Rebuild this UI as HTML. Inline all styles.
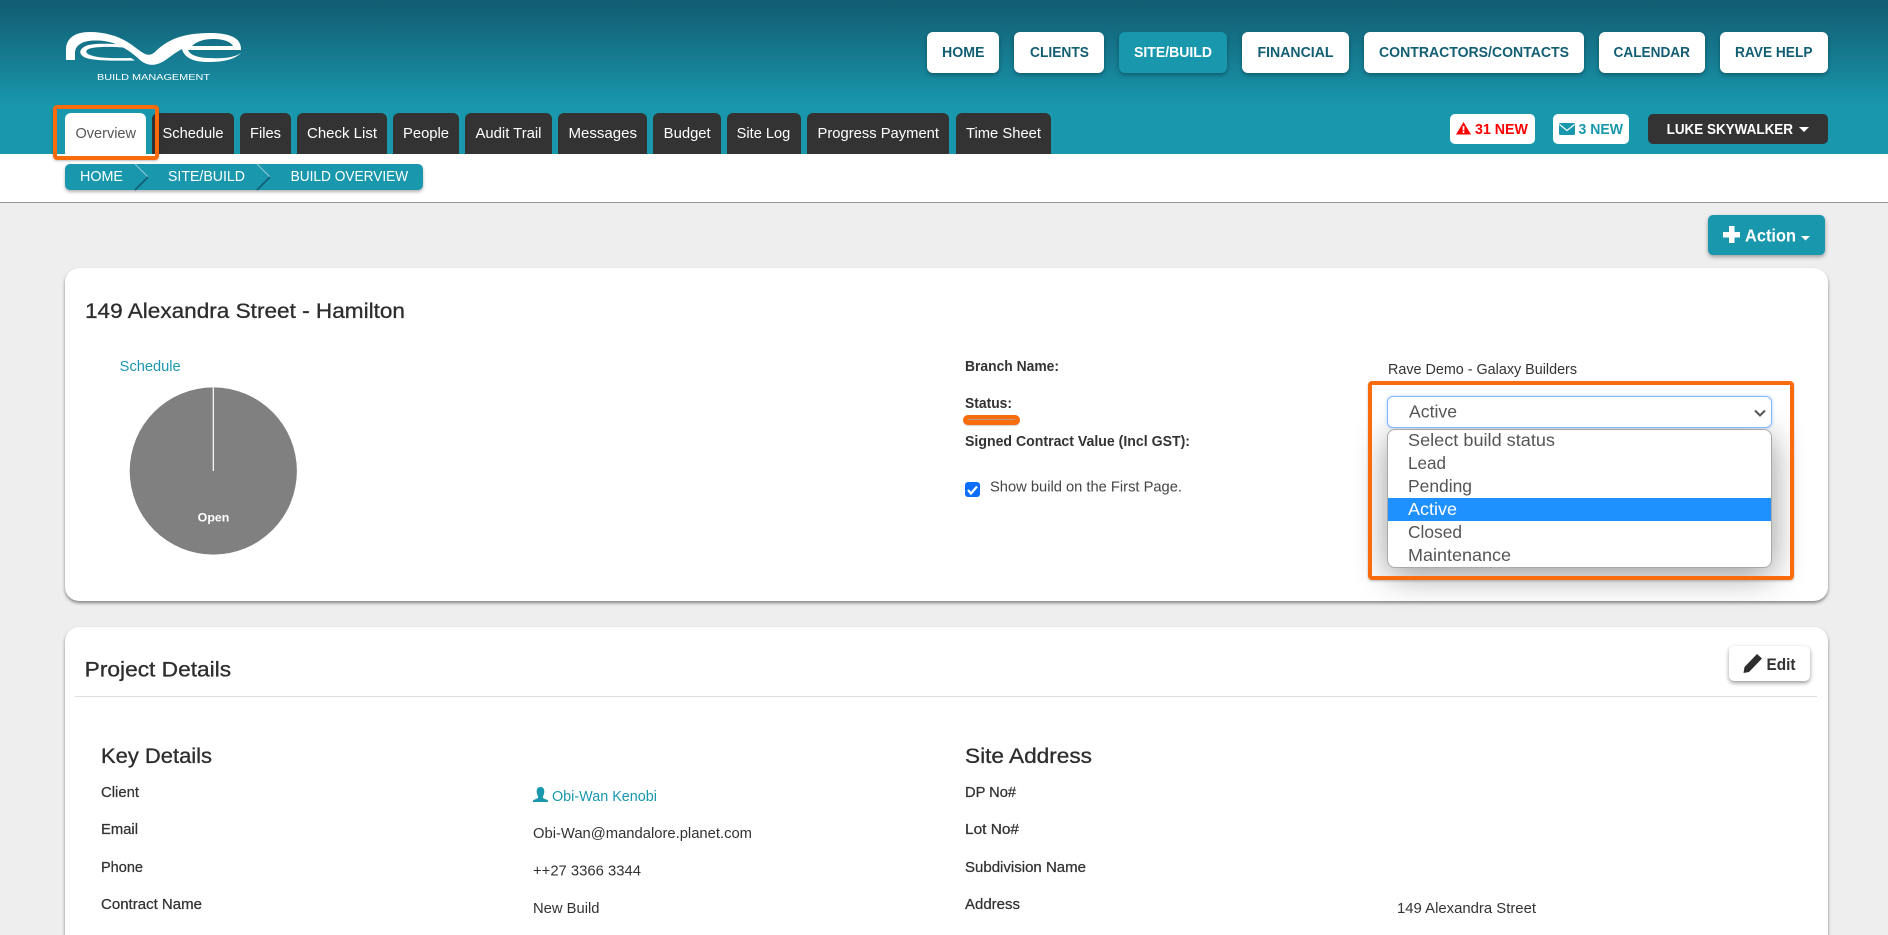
<!DOCTYPE html>
<html><head><meta charset="utf-8"><title>Build Overview</title>
<style>
*{box-sizing:border-box}
html,body{margin:0;padding:0;width:1888px;height:935px;overflow:hidden;background:#eee;font-family:"Liberation Sans",sans-serif}
#page{position:relative;width:1888px;height:935px;overflow:hidden;background:#eee}
.a{position:absolute}
#hdr{left:0;top:0;width:1888px;height:154px;background:linear-gradient(to bottom,#125e73 0,#125e73 6px,#1997ad 105px,#1997ad 154px)}
#bar{left:0;top:154px;width:1888px;height:49px;background:#fff;border-bottom:1px solid #999}
.nav{top:32px;height:41px;background:#fff;border-radius:6px;box-shadow:0 2px 4px rgba(0,0,0,.3)}
.tab{top:113px;height:41px;background:#333;border-radius:6px 6px 0 0}
.bdg{top:114px;height:30px;background:#fff;border-radius:5px}
.card{background:#fff;border-radius:14px;box-shadow:0 2px 3px rgba(0,0,0,.45)}
svg text{font-family:"Liberation Sans",sans-serif;white-space:pre}
.n{font-size:14.5px;font-weight:700;fill:#125e73}
.t{font-size:14.4px;fill:#fff}
.l{font-size:14.4px;fill:#333}
.b{font-size:14.4px;font-weight:700;fill:#333}
.m{font-size:14.4px;fill:#333;stroke:#333;stroke-width:.25}
.h{font-size:20.8px;fill:#2d2d2d;stroke:#2d2d2d;stroke-width:.3}
.o{font-size:17.6px;fill:#555}
</style></head><body>
<div id="page">
<div class="a" id="hdr"></div>
<div class="a" id="bar"></div>

<div class="a nav" style="left:927px;width:72px"></div>
<div class="a nav" style="left:1014px;width:90px"></div>
<div class="a nav" style="left:1119px;width:108px;background:#1997ad"></div>
<div class="a nav" style="left:1242px;width:107px"></div>
<div class="a nav" style="left:1364px;width:220px"></div>
<div class="a nav" style="left:1599px;width:106px"></div>
<div class="a nav" style="left:1720px;width:108px"></div>

<div class="a tab" style="left:65px;width:81px;background:#fff"></div>
<div class="a tab" style="left:152px;width:82px"></div>
<div class="a tab" style="left:240px;width:51px"></div>
<div class="a tab" style="left:297px;width:90px"></div>
<div class="a tab" style="left:393px;width:66px"></div>
<div class="a tab" style="left:465px;width:87px"></div>
<div class="a tab" style="left:558px;width:89px"></div>
<div class="a tab" style="left:653px;width:68px"></div>
<div class="a tab" style="left:727px;width:74px"></div>
<div class="a tab" style="left:807px;width:142px"></div>
<div class="a tab" style="left:956px;width:95px"></div>

<div class="a bdg" style="left:1450px;width:85px"></div>
<div class="a bdg" style="left:1553px;width:76px"></div>
<div class="a bdg" style="left:1648px;width:180px;background:#333"></div>

<div class="a" style="left:65px;top:164px;width:358px;height:26px;background:#1997ad;border-radius:5px;box-shadow:0 2px 3px rgba(0,0,0,.3)"></div>
<div class="a" style="left:1708px;top:215px;width:117px;height:40px;background:#1997ad;border-radius:5px;box-shadow:0 2px 4px rgba(0,0,0,.35)"></div>

<div class="a card" style="left:65px;top:268px;width:1763px;height:333px"></div>
<div class="a card" style="left:65px;top:627px;width:1763px;height:340px"></div>
<div class="a" style="left:75px;top:696px;width:1742px;height:1px;background:#ddd"></div>
<div class="a" style="left:1729px;top:646px;width:81px;height:35px;background:#fff;border-radius:5px;box-shadow:0 2px 4px rgba(0,0,0,.4)"></div>

<!-- dropdown -->
<div class="a" style="left:1388px;top:429px;width:384px;height:138px;border-radius:8px;box-shadow:0 8px 34px rgba(0,0,0,.42)"></div>
<div class="a" style="left:1387px;top:396px;width:385px;height:32px;background:#fff;border:1px solid #86b7fe;border-radius:6px;box-shadow:0 0 3px rgba(13,110,253,.3)"></div>
<div class="a" style="left:1387px;top:429px;width:385px;height:139px;background:#fff;border:1px solid #aaa;border-radius:8px;overflow:hidden"><div class="a" style="left:0;top:68px;width:383px;height:23px;background:#1e90ff"></div></div>

<!-- checkbox -->
<div class="a" style="left:965px;top:482px;width:15px;height:15px;background:#0d6efd;border-radius:3px"></div>

<!-- orange annotations -->
<div class="a" style="left:53px;top:105px;width:106px;height:55px;border:4px solid #f96b0b;border-radius:4px;box-shadow:0 1px 2px rgba(0,0,0,.25)"></div>
<div class="a" style="left:1368px;top:381px;width:426px;height:199px;border:4px solid #f96b0b;border-radius:4px;box-shadow:0 1px 2px rgba(0,0,0,.25)"></div>
<div class="a" style="left:963px;top:415px;width:57px;height:10px;background:#f96b0b;border-radius:5px;box-shadow:0 1px 1px rgba(0,0,0,.2)"><div class="a" style="left:5px;top:4px;width:47px;height:1px;background:#bb9a85"></div></div>

<svg class="a" style="left:0;top:0" width="1888" height="935" viewBox="0 0 1888 935" xmlns="http://www.w3.org/2000/svg">
<!-- logo -->
<path fill="#fff" fill-rule="evenodd" d="M66 60L66 50C66 38 75 32 90 32C108 32 124 38 136 48C145 55 149 57 155 52C167 40 182 33 210 33C230 33 241 38 241 49L241 50L188 50C190 55 198 58 210 58C225 59 235 57 241 53C234 60 222 62 208 62C192 62 184 57 182 49C176 52 170 57 164 61C155 66.5 147 66 140 60C128 49 115 41 98 40.5C84 40 76 44 75 52L75 60ZM192 46C197 41 205 39 213 39C224 39 231 42 233 46Z"/>
<path fill="#fff" d="M122 44.5C105 43.5 90 43 84 47C79 50 79 54 84 57C90 60.5 110 61 135 60.5L131 58C112 58.5 97 58 90 55C85 53 85 50 90 48.5C97 46.5 110 46.5 123 47.5Z"/>
<text x="97" y="80" font-size="8" fill="#fff" textLength="113" lengthAdjust="spacingAndGlyphs">BUILD MANAGEMENT</text>

<!-- nav -->
<text class="n" x="942" y="57" textLength="42.5" lengthAdjust="spacingAndGlyphs">HOME</text>
<text class="n" x="1030" y="57" textLength="59" lengthAdjust="spacingAndGlyphs">CLIENTS</text>
<text class="n" x="1134" y="57" textLength="78" lengthAdjust="spacingAndGlyphs" style="fill:#fff">SITE/BUILD</text>
<text class="n" x="1257.5" y="57" textLength="76" lengthAdjust="spacingAndGlyphs">FINANCIAL</text>
<text class="n" x="1379" y="57" textLength="190" lengthAdjust="spacingAndGlyphs">CONTRACTORS/CONTACTS</text>
<text class="n" x="1613.5" y="57" textLength="76.5" lengthAdjust="spacingAndGlyphs">CALENDAR</text>
<text class="n" x="1735" y="57" textLength="77.5" lengthAdjust="spacingAndGlyphs">RAVE HELP</text>

<!-- tabs -->
<text class="t" x="75.5" y="138" textLength="60.5" lengthAdjust="spacingAndGlyphs" style="fill:#555">Overview</text>
<text class="t" x="162.5" y="138" textLength="61" lengthAdjust="spacingAndGlyphs">Schedule</text>
<text class="t" x="250" y="138" textLength="31" lengthAdjust="spacingAndGlyphs">Files</text>
<text class="t" x="307" y="138" textLength="70" lengthAdjust="spacingAndGlyphs">Check List</text>
<text class="t" x="403" y="138" textLength="46" lengthAdjust="spacingAndGlyphs">People</text>
<text class="t" x="475.5" y="138" textLength="66" lengthAdjust="spacingAndGlyphs">Audit Trail</text>
<text class="t" x="568.5" y="138" textLength="68.5" lengthAdjust="spacingAndGlyphs">Messages</text>
<text class="t" x="663.7" y="138" textLength="47" lengthAdjust="spacingAndGlyphs">Budget</text>
<text class="t" x="736.7" y="138" textLength="53.5" lengthAdjust="spacingAndGlyphs">Site Log</text>
<text class="t" x="817.5" y="138" textLength="121.5" lengthAdjust="spacingAndGlyphs">Progress Payment</text>
<text class="t" x="966" y="138" textLength="75" lengthAdjust="spacingAndGlyphs">Time Sheet</text>

<!-- badges -->
<path fill="#f00" d="M1463.5 122L1471 134.5H1456ZM1462.6 126V130.5H1464.4V126ZM1462.6 131.3V133H1464.4V131.3Z" fill-rule="evenodd"/>
<text x="1475" y="134" font-size="14.4" font-weight="700" fill="#f00" textLength="53" lengthAdjust="spacingAndGlyphs">31 NEW</text>
<rect x="1559" y="123" width="16" height="12" rx="1.5" fill="#1997ad"/>
<path d="M1559.5 124.5L1567 130.5L1574.5 124.5" fill="none" stroke="#fff" stroke-width="1.2"/>
<text x="1578.5" y="134" font-size="14.4" font-weight="700" fill="#1997ad" textLength="44.5" lengthAdjust="spacingAndGlyphs">3 NEW</text>
<text x="1666.6" y="134" font-size="14.4" font-weight="700" fill="#fff" textLength="126.4" lengthAdjust="spacingAndGlyphs">LUKE SKYWALKER</text>
<path d="M1799 127H1809L1804 132Z" fill="#fff"/>

<!-- breadcrumb -->
<text class="t" x="80" y="181" textLength="43" lengthAdjust="spacingAndGlyphs">HOME</text>
<text class="t" x="168" y="181" textLength="77" lengthAdjust="spacingAndGlyphs">SITE/BUILD</text>
<text class="t" x="290.6" y="181" textLength="117.6" lengthAdjust="spacingAndGlyphs">BUILD OVERVIEW</text>
<path d="M135 164L148 177" stroke="#8fcbd6" stroke-width="1" fill="none"/>
<path d="M148 177L135 190" stroke="#125e73" stroke-width="1.6" fill="none"/>
<path d="M257 164L270 177" stroke="#8fcbd6" stroke-width="1" fill="none"/>
<path d="M270 177L257 190" stroke="#125e73" stroke-width="1.6" fill="none"/>

<!-- action -->
<path fill="#fff" d="M1729 226H1734.5V232H1740V237.5H1734.5V243H1729V237.5H1723V232H1729Z"/>
<text x="1745" y="241.5" font-size="17.6" font-weight="700" fill="#fff" textLength="51" lengthAdjust="spacingAndGlyphs">Action</text>
<path d="M1801 236H1810L1805.5 240.5Z" fill="#fff"/>

<!-- card 1 -->
<text class="h" x="85" y="318" textLength="320" lengthAdjust="spacingAndGlyphs">149 Alexandra Street - Hamilton</text>
<text class="t" x="119.7" y="371" textLength="61" lengthAdjust="spacingAndGlyphs" style="fill:#1997ad">Schedule</text>
<circle cx="213.3" cy="471" r="83.6" fill="#808080"/>
<path d="M213.3 387V471" stroke="#fff" stroke-width="1.2"/>
<text x="197.7" y="521.5" font-size="12" font-weight="700" fill="#fff" textLength="31.7" lengthAdjust="spacingAndGlyphs">Open</text>

<text class="b" x="965" y="371" textLength="94" lengthAdjust="spacingAndGlyphs">Branch Name:</text>
<text class="b" x="965" y="408" textLength="47" lengthAdjust="spacingAndGlyphs">Status:</text>
<text class="b" x="965" y="446" textLength="225" lengthAdjust="spacingAndGlyphs">Signed Contract Value (Incl GST):</text>
<path d="M968 490L971 493.5L977 486.5" fill="none" stroke="#fff" stroke-width="2.2"/>
<text class="l" x="990" y="491.5" textLength="192" lengthAdjust="spacingAndGlyphs" style="fill:#444">Show build on the First Page.</text>
<text class="l" x="1388" y="374" textLength="189" lengthAdjust="spacingAndGlyphs">Rave Demo - Galaxy Builders</text>

<text class="o" x="1409" y="417.5" textLength="48" lengthAdjust="spacingAndGlyphs">Active</text>
<path d="M1755 410.5L1760 415.5L1765 410.5" fill="none" stroke="#555" stroke-width="2"/>
<text class="o" x="1408" y="446" textLength="147" lengthAdjust="spacingAndGlyphs">Select build status</text>
<text class="o" x="1408" y="469" textLength="38" lengthAdjust="spacingAndGlyphs">Lead</text>
<text class="o" x="1408" y="492" textLength="64" lengthAdjust="spacingAndGlyphs">Pending</text>
<text class="o" x="1408" y="515" textLength="49" lengthAdjust="spacingAndGlyphs" style="fill:#fff">Active</text>
<text class="o" x="1408" y="538" textLength="54" lengthAdjust="spacingAndGlyphs">Closed</text>
<text class="o" x="1408" y="561" textLength="103" lengthAdjust="spacingAndGlyphs">Maintenance</text>

<!-- card 2 -->
<text class="h" x="84.7" y="676.5" textLength="146.4" lengthAdjust="spacingAndGlyphs">Project Details</text>
<path fill="#2d2d2d" d="M1757 654L1762 658.5L1749 672L1743.5 673L1744.5 667Z"/>
<text x="1766.5" y="670" font-size="17" font-weight="700" fill="#333" textLength="29" lengthAdjust="spacingAndGlyphs">Edit</text>

<text class="h" x="101" y="763" textLength="111" lengthAdjust="spacingAndGlyphs">Key Details</text>
<text class="h" x="965" y="763" textLength="127" lengthAdjust="spacingAndGlyphs">Site Address</text>

<text class="m" x="101" y="797" textLength="38" lengthAdjust="spacingAndGlyphs">Client</text>
<text class="m" x="101" y="834" textLength="37" lengthAdjust="spacingAndGlyphs">Email</text>
<text class="m" x="101" y="872" textLength="42" lengthAdjust="spacingAndGlyphs">Phone</text>
<text class="m" x="101" y="909" textLength="101" lengthAdjust="spacingAndGlyphs">Contract Name</text>

<path fill="#1997ad" d="M540.5 787C543.5 787 544.5 789.5 544.3 792C544.1 794.5 543 796 542.8 797.5C543.5 799 547 799.3 548 800.5V802H533V800.5C534 799.3 537.5 799 538.2 797.5C538 796 536.9 794.5 536.7 792C536.5 789.5 537.5 787 540.5 787Z"/>
<text class="t" x="552" y="801" textLength="105" lengthAdjust="spacingAndGlyphs" style="fill:#1997ad">Obi-Wan Kenobi</text>
<text class="l" x="533" y="838" textLength="219" lengthAdjust="spacingAndGlyphs">Obi-Wan@mandalore.planet.com</text>
<text class="l" x="533" y="875.5" textLength="108" lengthAdjust="spacingAndGlyphs">++27 3366 3344</text>
<text class="l" x="533" y="913" textLength="66.5" lengthAdjust="spacingAndGlyphs">New Build</text>

<text class="m" x="965" y="797" textLength="51" lengthAdjust="spacingAndGlyphs">DP No#</text>
<text class="m" x="965" y="834" textLength="54" lengthAdjust="spacingAndGlyphs">Lot No#</text>
<text class="m" x="965" y="872" textLength="121" lengthAdjust="spacingAndGlyphs">Subdivision Name</text>
<text class="m" x="965" y="909" textLength="55" lengthAdjust="spacingAndGlyphs">Address</text>
<text class="l" x="1397" y="913" textLength="139" lengthAdjust="spacingAndGlyphs">149 Alexandra Street</text>
</svg>
</div>
</body></html>
